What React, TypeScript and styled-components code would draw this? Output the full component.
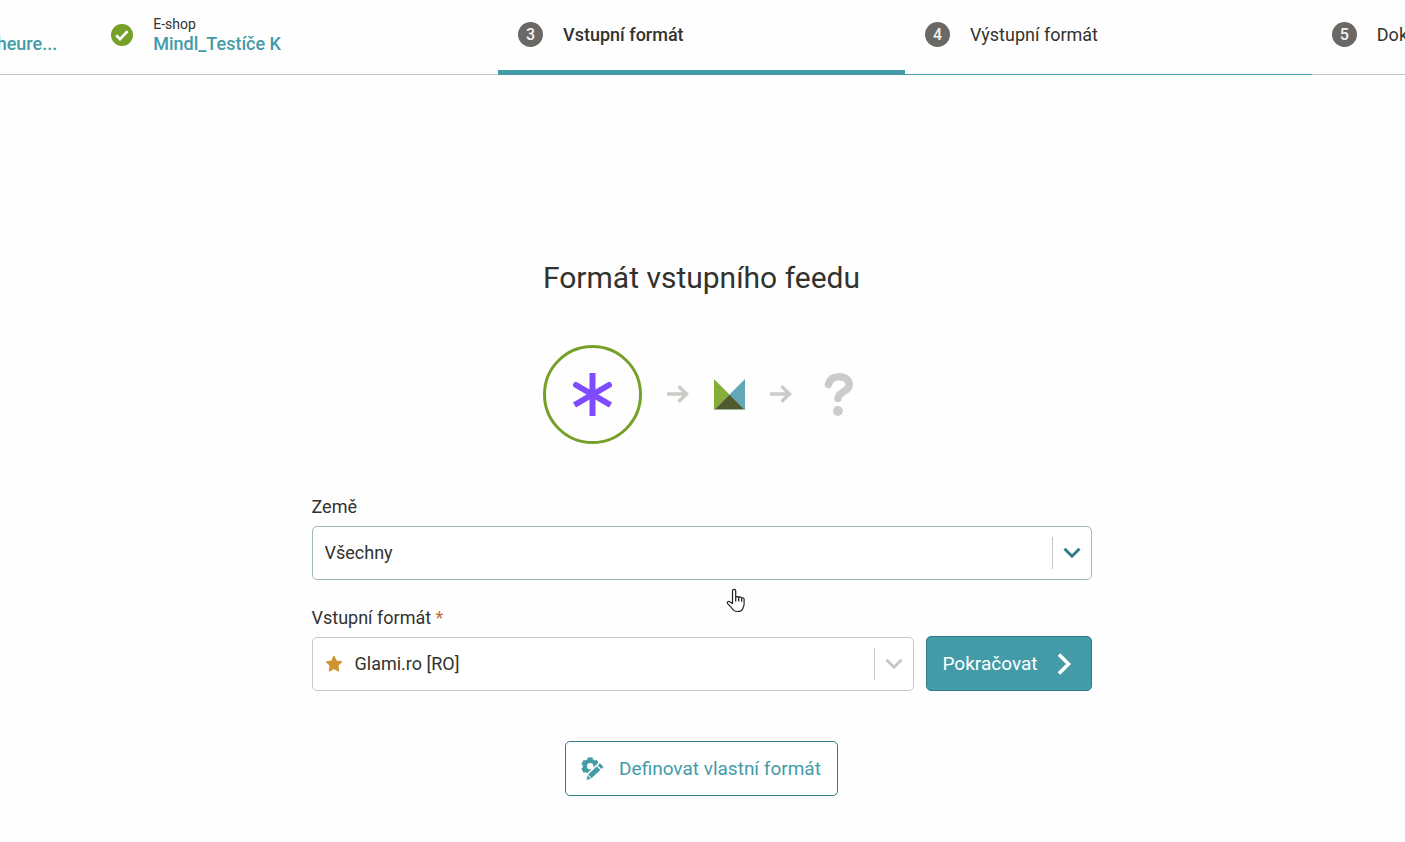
import React from "react";
import styled, { createGlobalStyle, css } from "styled-components";

const color = {
  teal: "#439ba8",
  tealDark: "#2f7b88",
  ink: "#32322e",
  green: "#76a028",
  line: "#c6c6c4",
  badge: "#696865",
};

const GlobalStyle = createGlobalStyle`
  *, *::before, *::after { box-sizing: border-box; }
  html { background: #fefefe; }
  body {
    margin: 0;
    overflow-x: hidden;
    color: ${color.ink};
    font-family: Roboto, "Liberation Sans", sans-serif;
    font-size: 18px;
    line-height: 24px;
  }
  button, select { font: inherit; }
`;

const Page = styled.div`
  min-height: 100vh;
  padding-right: 2px;
`;

const Steps = styled.ol`
  display: flex;
  justify-content: center;
  height: 75px;
  margin: 0 -2px 0 0;
  padding: 0 2px 0 0;
  list-style: none;
  overflow: hidden;
`;

type StepState = "done" | "current" | "next" | "later";

const stepLine = {
  done: css`border-bottom: 1px solid ${color.line};`,
  current: css`border-bottom: 5px solid ${color.teal}; padding-bottom: 1px; font-weight: 500;`,
  next: css`border-bottom: 1px solid ${color.teal};`,
  later: css`border-bottom: 1px solid ${color.line};`,
};

const Step = styled.li<{ $state: StepState; $alignEnd?: boolean }>`
  flex: 0 0 29%;
  display: flex;
  align-items: center;
  justify-content: ${(p) => (p.$alignEnd ? "flex-end" : "flex-start")};
  gap: 20px;
  padding: 0 34px 5px 20px;
  white-space: nowrap;
  ${(p) => stepLine[p.$state]}
`;

const Badge = styled.span`
  flex: none;
  width: 25px;
  height: 25px;
  border-radius: 50%;
  background: ${color.badge};
  color: #f4f4f2;
  font-size: 16px;
  font-weight: 500;
  line-height: 25px;
  text-align: center;
`;

const StepText = styled.div`
  display: flex;
  flex-direction: column;
  padding-bottom: 2px;
`;

const StepCaption = styled.span`
  min-height: 20px;
  font-size: 14px;
  line-height: 20px;
`;

const StepLink = styled.a`
  color: ${color.teal};
  font-weight: 500;
  line-height: 20px;
  text-decoration: none;
`;

const Main = styled.main`
  display: flex;
  flex-direction: column;
  align-items: center;
  padding: 183px 24px 46px;
`;

const Title = styled.h1`
  margin: 0;
  font-size: 30px;
  font-weight: 400;
  line-height: 40px;
`;

const Flow = styled.div`
  display: flex;
  align-items: center;
  gap: 25px;
  margin-top: 47px;
`;

const Source = styled.div`
  display: grid;
  place-items: center;
  width: 99px;
  height: 99px;
  border: 3px solid ${color.green};
  border-radius: 50%;
`;

const Form = styled.form`
  position: relative;
  display: flex;
  flex-direction: column;
  width: 100%;
  max-width: 780px;
  margin-top: 51px;
`;

const Label = styled.label`
  align-self: flex-start;
  margin-bottom: 7px;
`;

const FormatLabel = styled(Label)`
  margin-bottom: 6px;
`;

const Required = styled.span`
  color: #c4703a;
`;

const Row = styled.div`
  display: flex;
  align-items: flex-end;
  gap: 12px;
  margin-bottom: 50px;
`;

const Field = styled.div<{ $muted?: boolean }>`
  flex: 1;
  display: grid;
  grid-template-columns: 42px 1fr 39px;
  align-items: center;
  height: 54px;
  border: 1px solid ${(p) => (p.$muted ? color.line : "#a3b7b7")};
  border-radius: 5px;
  background: #fff;
  color: ${(p) => (p.$muted ? "#c8c7c2" : color.tealDark)};
`;

const CountryField = styled(Field)`
  flex: none;
  margin-bottom: 26px;
`;

const Select = styled.select<{ $inset?: boolean }>`
  grid-area: 1 / 1 / 2 / 4;
  width: 100%;
  height: 52px;
  padding: 0 48px 0 ${(p) => (p.$inset ? 42 : 12)}px;
  border: 0;
  border-radius: 5px;
  background: transparent;
  color: ${color.ink};
  appearance: none;
`;

const StarSlot = styled.span`
  grid-area: 1 / 1 / 2 / 2;
  display: grid;
  place-items: center;
  pointer-events: none;
`;

const ArrowSlot = styled.span`
  grid-area: 1 / 3 / 2 / 4;
  display: grid;
  place-items: center;
  height: 32px;
  border-left: 1px solid ${color.line};
  pointer-events: none;
`;

const Button = styled.button<{ $primary?: boolean }>`
  display: flex;
  align-items: center;
  height: 55px;
  border: 1px solid ${color.tealDark};
  border-radius: 5px;
  background: ${(p) => (p.$primary ? color.teal : "#fff")};
  color: ${(p) => (p.$primary ? "#fff" : color.teal)};
  font-size: 19px;
  white-space: nowrap;
  gap: ${(p) => (p.$primary ? 19 : 15)}px;
  padding: ${(p) => (p.$primary ? "0 20px 0 16px" : "0 16px 0 15px")};
`;

const Pointer = styled.svg`
  position: absolute;
  top: 93px;
  left: 414px;
  pointer-events: none;
`;

const CheckIcon = () => (
  <svg width="22" height="22" viewBox="0 0 22 22" aria-hidden="true">
    <circle cx="11" cy="11" r="11" fill={color.green} />
    <path d="M5.2 11.3l3.8 3.8 7.6-7.8" fill="none" stroke="#fff" strokeWidth="2.7" />
  </svg>
);

const AsteriskLogo = () => (
  <svg width="43" height="43" viewBox="0 0 43 43" aria-hidden="true">
    <g stroke="#7f4bff" strokeWidth="6" fill="none">
      <path d="M21.5 0v43" />
      <path d="M3.5 32L21.5 21.5L39.5 32" />
      <path d="M5 12L21.5 21.5L38 12" strokeLinecap="round" />
    </g>
  </svg>
);

const FlowArrow = () => (
  <svg width="22" height="19" viewBox="0 0 22 19" aria-hidden="true">
    <path d="M0 9h19.5M11.5 1.2L19.5 9l-8 7.8" fill="none" stroke="#cbcbc7" strokeWidth="3.4" />
  </svg>
);

const MergadoLogo = () => (
  <svg width="31" height="31" viewBox="0 0 31 31" aria-hidden="true">
    <path d="M0 0l15.5 15.5L0 31z" fill="#85ad37" />
    <path d="M31 0v31L15.5 15.5z" fill="#61a7b8" />
    <path d="M0 31l15.5-15.5L31 31z" fill="#505a30" />
    <path d="M0 30.5h31" stroke="#9eb2a0" />
  </svg>
);

const QuestionIcon = () => (
  <svg width="43" height="43" viewBox="0 0 43 43" aria-hidden="true">
    <path
      d="M11.4 11.4C12.8 6.6 16.500 3.800 22 3.800c6.200 0 10.200 3 10.200 8 0 7.200-11.300 7-11.300 13.800"
      fill="none"
      stroke="#cbcbcb"
      strokeWidth="7.4"
      strokeLinecap="round"
    />
    <circle cx="20.9" cy="38" r="4.900" fill="#cbcbcb" />
  </svg>
);

const StarIcon = () => (
  <svg width="18" height="18" viewBox="0 0 18 18" aria-hidden="true">
    <path
      d="M9 1l2.4 5 5.4.8-3.9 3.9.9 5.5L9 13.6l-4.8 2.6.9-5.5-3.9-3.9L6.6 6z"
      fill="#ce942d"
      stroke="#ce942d"
      strokeLinejoin="round"
    />
  </svg>
);

const ChevronDown = () => (
  <svg width="18" height="12" viewBox="0 0 18 12" aria-hidden="true">
    <path d="M1.5 1.8L9 9.2l7.5-7.4" fill="none" stroke="currentColor" strokeWidth="3" />
  </svg>
);

const ChevronRight = () => (
  <svg width="14" height="22" viewBox="0 0 14 22" aria-hidden="true">
    <path d="M2 1.5L11.5 11 2 20.5" fill="none" stroke="currentColor" strokeWidth="3.6" />
  </svg>
);

const GearPencilIcon = () => (
  <svg width="23" height="23" viewBox="0 0 23 23" aria-hidden="true">
    <circle cx="9.2" cy="9.3" r="5.4" fill="none" stroke={color.teal} strokeWidth="4.4" />
    <g stroke={color.teal} strokeWidth="5">
      <path d="M9.2 4.5V0.400" />
      <path d="M9.2 4.5V0.400" transform="rotate(60 9.2 9.3)" />
      <path d="M9.2 4.5V0.400" transform="rotate(240 9.2 9.3)" />
      <path d="M9.2 4.5V0.400" transform="rotate(300 9.2 9.3)" />
    </g>
    <path d="M4.500 23L22 6.500" stroke="#fff" strokeWidth="7.4" />
    <path d="M8.800 19.400L17.600 11.100" stroke={color.teal} strokeWidth="5" />
    <path d="M18.600 10.200L20.800 8.100" stroke={color.teal} strokeWidth="5" />
    <path d="M6.600 18.300l3.200 3.400-4.200 1.200z" fill={color.teal} />
  </svg>
);

const HandPointer = () => (
  <Pointer width="20" height="26" viewBox="0 0 20 26" aria-hidden="true">
    <path
      d="M6.5 15.5V3a1.6 1.6 0 0 1 3.2 0v6.5a1.6 1.6 0 0 1 3 .4 1.5 1.5 0 0 1 2.9.5 1.4 1.4 0 0 1 2.5 1v4.6c0 1.8-.6 2.6-1.2 4.2-.8 2.2-2.2 3.3-5.2 3.3-3.6 0-4.7-1.3-6.2-3.800L1.6 15.6c-1-1.8.8-2.9 2.2-1.8z"
      fill="#fff"
      stroke="#1e2226"
      strokeWidth="1.2"
      strokeLinejoin="round"
    />
    <path d="M9.7 9.5v4M12.7 10v3.5M15.6 10.8v3" stroke="#1e2226" strokeWidth="1.2" />
  </Pointer>
);

export default function App() {
  return (
    <Page>
      <GlobalStyle />
      <Steps>
        <Step $state="done" $alignEnd>
          <StepText>
            <StepCaption />
            <StepLink href="#feed">heure...</StepLink>
          </StepText>
        </Step>
        <Step $state="done">
          <CheckIcon />
          <StepText>
            <StepCaption>E-shop</StepCaption>
            <StepLink href="#eshop">Mindl_Testíče K</StepLink>
          </StepText>
        </Step>
        <Step $state="current" aria-current="step">
          <Badge>3</Badge>
          Vstupní formát
        </Step>
        <Step $state="next">
          <Badge>4</Badge>
          Výstupní formát
        </Step>
        <Step $state="later">
          <Badge>5</Badge>
          Dokončení
        </Step>
      </Steps>
      <Main>
        <Title>Formát vstupního feedu</Title>
        <Flow>
          <Source>
            <AsteriskLogo />
          </Source>
          <FlowArrow />
          <MergadoLogo />
          <FlowArrow />
          <QuestionIcon />
        </Flow>
        <Form onSubmit={(e) => e.preventDefault()}>
          <Label htmlFor="country">Země</Label>
          <CountryField>
            <Select id="country">
              <option>Všechny</option>
            </Select>
            <ArrowSlot>
              <ChevronDown />
            </ArrowSlot>
          </CountryField>
          <FormatLabel htmlFor="format">
            Vstupní formát <Required>*</Required>
          </FormatLabel>
          <Row>
            <Field $muted>
              <StarSlot>
                <StarIcon />
              </StarSlot>
              <Select id="format" $inset required>
                <option>Glami.ro [RO]</option>
              </Select>
              <ArrowSlot>
                <ChevronDown />
              </ArrowSlot>
            </Field>
            <Button type="submit" $primary>
              Pokračovat
              <ChevronRight />
            </Button>
          </Row>
          <HandPointer />
        </Form>
        <Button type="button">
          <GearPencilIcon />
          Definovat vlastní formát
        </Button>
      </Main>
    </Page>
  );
}
